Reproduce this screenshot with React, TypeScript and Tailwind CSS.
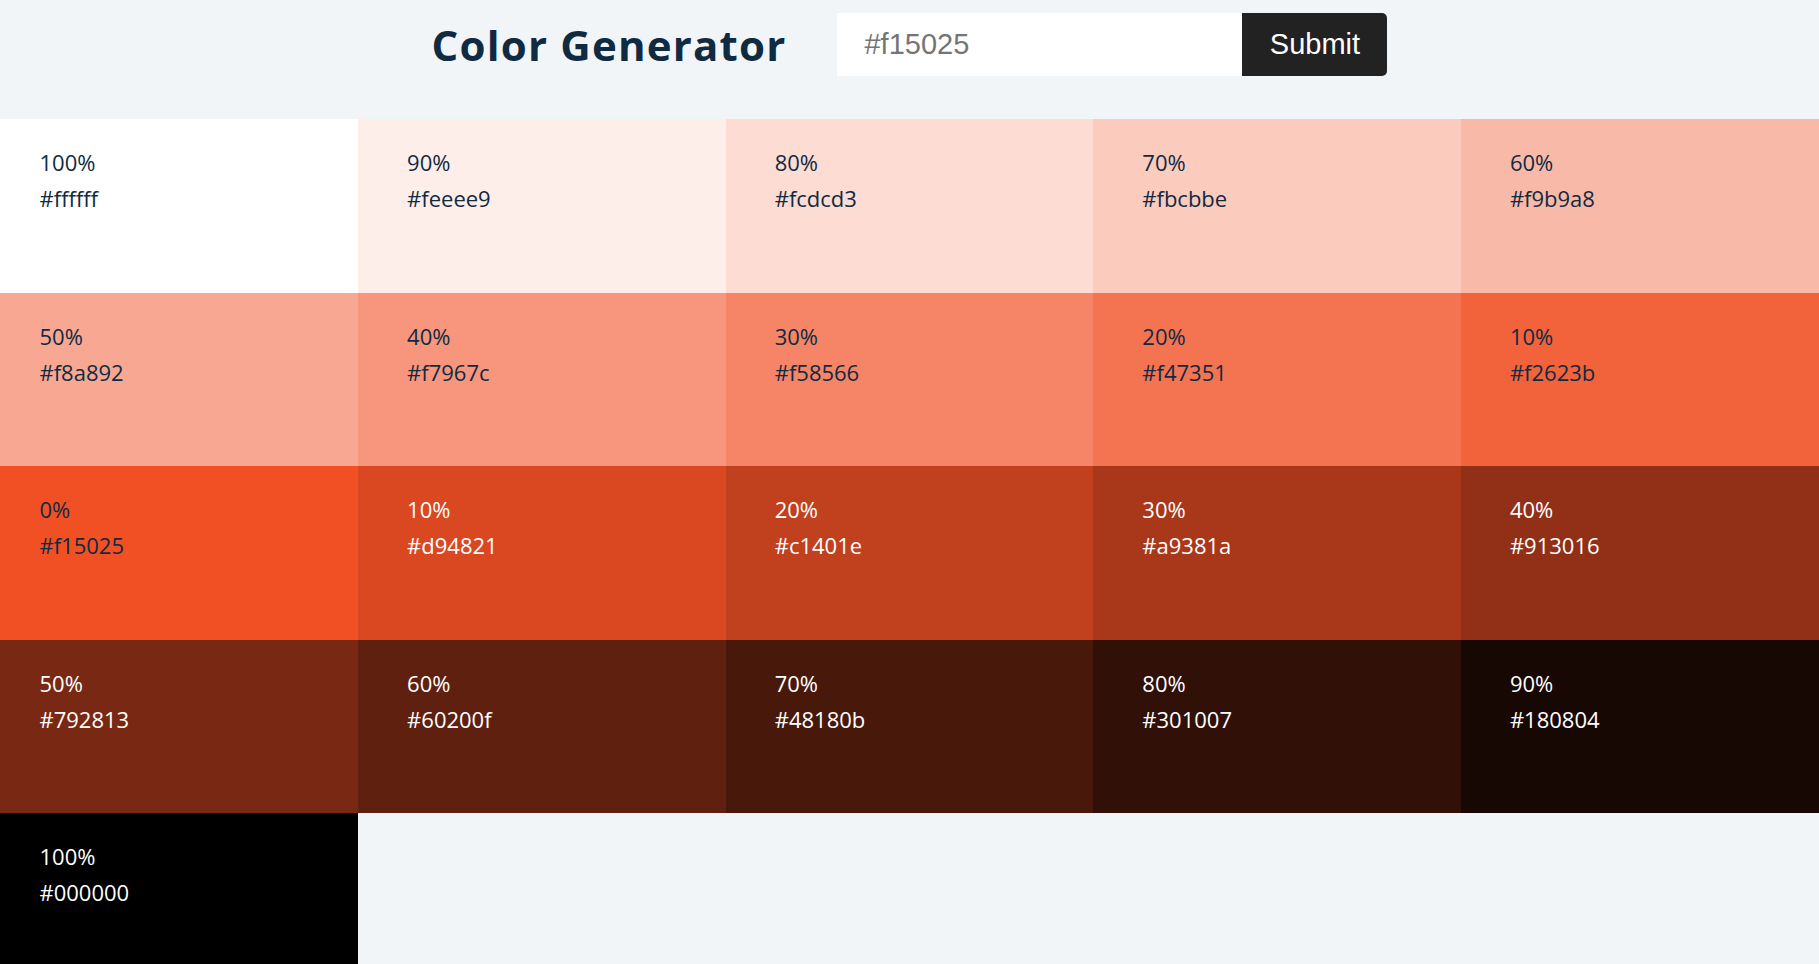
import React from "react";

const colors: { pct: string; hex: string; light: boolean }[] = [
  { pct: "100%", hex: "#ffffff", light: false },
  { pct: "90%", hex: "#feeee9", light: false },
  { pct: "80%", hex: "#fcdcd3", light: false },
  { pct: "70%", hex: "#fbcbbe", light: false },
  { pct: "60%", hex: "#f9b9a8", light: false },
  { pct: "50%", hex: "#f8a892", light: false },
  { pct: "40%", hex: "#f7967c", light: false },
  { pct: "30%", hex: "#f58566", light: false },
  { pct: "20%", hex: "#f47351", light: false },
  { pct: "10%", hex: "#f2623b", light: false },
  { pct: "0%", hex: "#f15025", light: false },
  { pct: "10%", hex: "#d94821", light: true },
  { pct: "20%", hex: "#c1401e", light: true },
  { pct: "30%", hex: "#a9381a", light: true },
  { pct: "40%", hex: "#913016", light: true },
  { pct: "50%", hex: "#792813", light: true },
  { pct: "60%", hex: "#60200f", light: true },
  { pct: "70%", hex: "#48180b", light: true },
  { pct: "80%", hex: "#301007", light: true },
  { pct: "90%", hex: "#180804", light: true },
  { pct: "100%", hex: "#000000", light: true },
];

export default function App() {
  return (
    <div className="min-h-screen overflow-x-hidden bg-[#f1f5f8] font-['Open_Sans',sans-serif]">
      <header className="h-[119px] flex justify-center items-start pt-[13px] gap-[51px]">
        <h3 className="text-[42px] leading-[63px] font-bold tracking-[1.2px] text-[#102a42] font-['Open_Sans',sans-serif]">
          Color Generator
        </h3>
        <form className="flex" onSubmit={(e) => e.preventDefault()}>
          <input
            type="text"
            placeholder="#f15025"
            className="w-[405px] h-[63px] bg-white pl-[27px] text-[29px] font-['Liberation_Sans',Arial,sans-serif] text-[#222] placeholder:text-[#757575] outline-none"
          />
          <button
            type="submit"
            className="w-[145px] h-[63px] bg-[#222222] text-white text-[29px] font-['Liberation_Sans',Arial,sans-serif] rounded-r-[5px]"
          >
            Submit
          </button>
        </form>
      </header>
      <section className="grid grid-cols-5 w-[1838px] -ml-[9.5px] auto-rows-[173.5px]">
        {colors.map((c, i) => (
          <article
            key={i}
            style={{ backgroundColor: c.hex }}
            className={
              "pl-[49px] pt-[25px] text-[22px] leading-[36px] " +
              (c.light ? "text-white" : "text-[#102a42]")
            }
          >
            <p>{c.pct}</p>
            <p>{c.hex}</p>
          </article>
        ))}
      </section>
    </div>
  );
}
